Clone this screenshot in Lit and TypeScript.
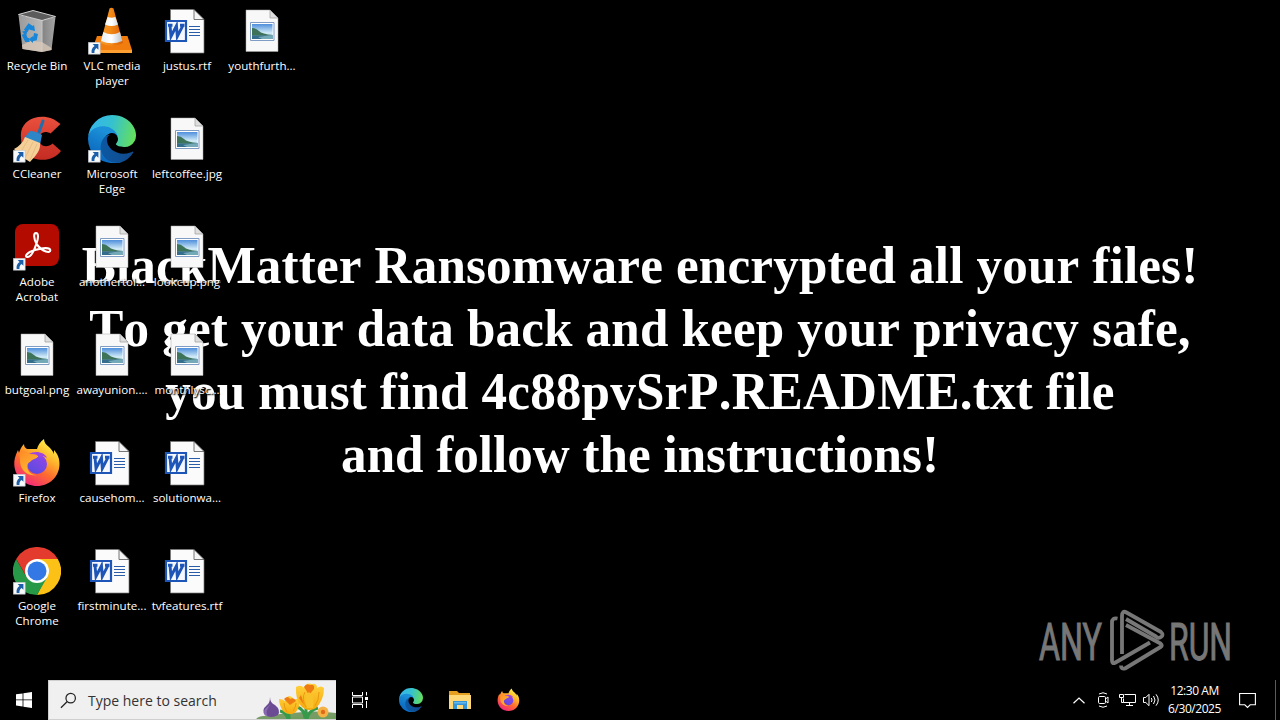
import { LitElement, html, css, svg } from "lit";
import { customElement, property } from "lit/decorators.js";

const edge = html`<svg viewBox="0 0 256 256">
  <defs>
    <linearGradient id="e1" x1="60" y1="178" x2="240" y2="178" gradientUnits="userSpaceOnUse"><stop offset="0" stop-color="#0c59a4"/><stop offset="1" stop-color="#114a8b"/></linearGradient>
    <linearGradient id="e2" x1="110" y1="100" x2="45" y2="235" gradientUnits="userSpaceOnUse"><stop offset="0" stop-color="#1b8fd8"/><stop offset=".5" stop-color="#1279c8"/><stop offset="1" stop-color="#0a67c0"/></linearGradient>
    <linearGradient id="e3" x1="10" y1="60" x2="250" y2="120" gradientUnits="userSpaceOnUse"><stop offset="0" stop-color="#35b6ec"/><stop offset=".45" stop-color="#35c1cf"/><stop offset="1" stop-color="#66e05a"/></linearGradient>
  </defs>
  <path fill="url(#e1)" d="M235.68 195.46a93.73 93.73 0 0 1-10.54 4.71 101.87 101.87 0 0 1-35.9 6.46c-47.32 0-88.54-32.55-88.54-74.32a31.48 31.48 0 0 1 16.43-27.31c-42.8 1.8-53.8 46.4-53.8 72.53 0 73.88 68.09 81.37 82.76 81.37 7.91 0 19.84-2.3 27-4.56l1.31-.44a128.34 128.34 0 0 0 66.6-52.8 4 4 0 0 0-5.32-5.64z"/>
  <path fill="url(#e2)" d="M105.73 241.42a79.2 79.2 0 0 1-22.74-21.34 80.72 80.72 0 0 1 29.53-120c3.12-1.47 8.45-4.13 15.54-4a32.35 32.35 0 0 1 25.69 13 31.88 31.88 0 0 1 6.36 18.66c0-.21 24.46-79.6-80-79.6-43.9 0-80 41.66-80 78.21a130.15 130.15 0 0 0 12.11 56 128 128 0 0 0 156.38 67.11 75.55 75.55 0 0 1-62.78-8z"/>
  <path fill="url(#e3)" d="M152.33 148.86c-.81 1.05-3.3 2.5-3.3 5.66 0 2.61 1.7 5.12 4.72 7.23 14.38 10 41.49 8.68 41.56 8.68a59.56 59.56 0 0 0 30.27-8.35 61.38 61.38 0 0 0 30.43-52.88c.26-22.41-8-37.31-11.34-43.91C223.46 23.84 177.72 0 128 0A128 128 0 0 0 0 126.2c.48-36.54 36.8-66.05 80-66.05 3.5 0 23.46.34 42 10.07 16.34 8.58 24.9 18.94 30.85 29.21 6.18 10.67 7.28 24.15 7.28 29.52s-2.74 13.33-7.8 19.91z"/>
</svg>`;

const firefox = html`<svg viewBox="0 0 48 48">
  <defs>
    <linearGradient id="f1" x1="38" y1="4" x2="12" y2="46" gradientUnits="userSpaceOnUse"><stop offset="0" stop-color="#fff04a"/><stop offset=".3" stop-color="#ffb52c"/><stop offset=".6" stop-color="#ff6a2f"/><stop offset="1" stop-color="#f0257f"/></linearGradient>
    <linearGradient id="f2" x1="32" y1="13" x2="18" y2="34" gradientUnits="userSpaceOnUse"><stop offset="0" stop-color="#9a45e8"/><stop offset="1" stop-color="#5a4be0"/></linearGradient>
    <linearGradient id="f3" x1="10" y1="10" x2="22" y2="26" gradientUnits="userSpaceOnUse"><stop offset="0" stop-color="#ff8a28"/><stop offset="1" stop-color="#ffb22e"/></linearGradient>
  </defs>
  <path fill="url(#f1)" d="M31 0c-4 3-6 6-7 10H14c-2-1-3-3-3-5-3 3-4 6-5 9l-1-3C2 17 1 21 1.300 26 2 38 12 47 24 47c13 0 22.500-10 22.500-22 0-6-2-10-5.500-14v4c-1-3-3-5-5-7-3-2-5-5-5-8z"/>
  <circle cx="24" cy="25" r="10" fill="url(#f2)"/>
  <path fill="#a044e0" d="M16 15c6-4 16-2 18 4-3-2-5-2-7-1-3-1-7-1-11-3z"/>
  <path fill="url(#f3)" d="M7 12c3-1 7 0 9 3 4 0 7 0 9 2 1 2-6 3-8 6-3 1-3 5-2 8 2 4 6 5 9 5-9 2-17-5-17-14 0-4-1-7 0-10z"/>
</svg>`;

const page = svg`<path fill="#f8f8f8" stroke="#a9a9a9" stroke-width=".5" d="M8 3h24l8 8v33.500H8z"/><path fill="#dedede" stroke="#9b9b9b" stroke-width=".7" d="M32 3v8h8z"/>`;

const art: Record<string, unknown> = {
  edge,
  firefox,
  bin: html`<svg viewBox="0 0 48 48">
    <defs><linearGradient id="b1" x1="0" x2="1"><stop offset="0" stop-color="#9a9a9a"/><stop offset=".62" stop-color="#b9b9b9"/><stop offset=".66" stop-color="#858585"/><stop offset="1" stop-color="#a5a5a5"/></linearGradient></defs>
    <path fill="url(#b1)" d="M5.500 8 29 13l13.500-3-4 33-9.500 2-19.500-3z"/>
    <path fill="#5c5c5c" stroke="#d2d2d2" stroke-width="1" d="M5.500 7.500 20 3.500 42.500 9.500 29 13.500z"/>
    <path fill="#dac7b8" opacity=".8" d="m9 38 9-4 11 1 9.500 6v2l-9.500 2-19.500-3z"/>
    <path stroke="#d4d4d4" stroke-width=".6" d="M29 13v31"/>
    <g fill="none" stroke="#1786d8" stroke-width="4"><path d="m12.500 24 3.500-5 4 2.500M10.500 27l3 6h3M18 32.500l4-1 1-5"/></g>
    <path fill="#1786d8" d="m21 18 1 6-6-1.500zM9 24.500l5.500-1L13 29zM20 29v7l-4-3.500z"/>
  </svg>`,
  vlc: html`<svg viewBox="0 0 48 48">
    <defs><linearGradient id="v1" x1="0" x2="1"><stop offset="0" stop-color="#f59a2c"/><stop offset=".45" stop-color="#f38a18"/><stop offset="1" stop-color="#d95f04"/></linearGradient>
    <linearGradient id="v2" x1="0" x2="1"><stop offset="0" stop-color="#e6edf2"/><stop offset=".5" stop-color="#fff"/><stop offset="1" stop-color="#b8c3cb"/></linearGradient></defs>
    <path fill="#f07d0e" d="M9 29h30.500l4.500 14v3H4v-3z"/><path fill="#ffa031" d="M4 43h40v3H4z"/>
    <path fill="url(#v1)" d="M21.500 1.500q2-1.500 4 0L35 36q-11 6-22.500 0z"/>
    <path fill="url(#v2)" d="M19.700 10q3.800 1.600 7.600 0l2.700 7.500q-6.500 3-13 0zM15.300 25q8.500 4.500 16.700 0l2.300 9q-10.500 4.500-21.300 0z"/>
  </svg>`,
  ccleaner: html`<svg viewBox="0 0 48 48">
    <defs><linearGradient id="c1" x1="0" y1="0" x2="0" y2="1"><stop offset="0" stop-color="#e9503d"/><stop offset="1" stop-color="#c42b22"/></linearGradient></defs>
    <path fill="url(#c1)" d="M47.500 9C40 2 30 0 21 3 12 6 7 13 8 23c0 11 6 20 17 21.500 10 1.500 18-2 23-8.500l-8.500-7.500c-4 4-11 4-13-2-2-8 5-12 11-8z"/>
    <path stroke="#1d6fae" stroke-width="3" stroke-linecap="round" d="m30 6-5 14"/>
    <path fill="#2d86c8" d="M17 16q6 0 12 4l-2 10-16-7z"/>
    <path fill="#f4cf98" d="m12 22 15 6c1 8-5 13-10 19Q7 41 1 34q8-4 11-12z"/>
    <path fill="none" stroke="#e3b67c" stroke-width=".8" d="m15 25-8 13m13-11-8 16m12-14-7 16"/>
  </svg>`,
  acrobat: html`<svg viewBox="0 0 48 48">
    <rect x="2" y="1" width="44" height="42" rx="8" fill="#b30b00"/>
    <path fill="none" stroke="#fff" stroke-width="2.100" stroke-linejoin="round" d="M23.500 21C20.500 15 20.500 10 23 10s2.700 5 .3 11C21 28 17.500 34 14.500 34c-3.500 0-1-4.500 7.500-7s15-2.500 15.300.2c.2 3.300-7.300 2.300-13.800-6.200z"/>
  </svg>`,
  chrome: html`<svg viewBox="0 0 48 48">
    <path fill="#e33b2e" d="M24 24 3.200 12A24 24 0 0 1 44.800 12z"/><path fill="#fbc116" d="M24 12h20.800A24 24 0 0 1 24 48l9-18z"/>
    <path fill="#279847" d="M3.200 12A24 24 0 0 0 24 48l10.400-18L13.600 30z"/><path fill="#e33b2e" d="M3.200 12 13.600 30 24 12z"/>
    <circle cx="24" cy="24" r="12" fill="#fff"/><circle cx="24" cy="24" r="9.500" fill="#3478e5"/>
  </svg>`,
  image: html`<svg viewBox="0 0 48 48">
    <defs><linearGradient id="i1" x1="0" y1="0" x2="0" y2="1"><stop offset="0" stop-color="#4f8fdc"/><stop offset=".6" stop-color="#d3ecf7"/><stop offset="1" stop-color="#8ab8d4"/></linearGradient></defs>
    ${page}
    <path fill="#fff" stroke="#7f9cc4" d="M12.500 15.500h23.500v18H12.500z"/><path fill="url(#i1)" d="M14 17h20.500v15H14z"/>
    <path fill="#3d7358" d="M14 21q4 0 7 3t13.500 4v.8H14z"/><path fill="#356d8c" d="M14 28.500h20.500V32H14z"/><path fill="#74aab8" d="m20 30 14.500-2v4H24z"/>
  </svg>`,
  word: html`<svg viewBox="0 0 48 48">
    <path fill="#fbfbfb" stroke="#777" stroke-width=".7" d="M7.500 2.500h23L41 12.500V46H7.500z"/><path fill="#f4f4f4" stroke="#555" stroke-width=".8" d="M31 2.500v10h10z"/>
    <path stroke="#2b5ca8" d="M26 19.500h11M26 22.500h11M26 25.500h11M26 28.500h11"/>
    <path fill="#f5f8ff" stroke="#1e56b8" stroke-width="2.200" d="M3 14h20v20H3z"/>
    <path fill="none" stroke="#1e56b8" stroke-width="2.900" d="M7 18.300 8 29.500l5.500-10.700.8 10.700 5.700-11.200M5 18.300h4.500m7.500 0h4.500" />
  </svg>`,
};

interface Item { icon: string; lines: string[]; link?: boolean }
const items: Item[] = [
  { icon: "bin", lines: ["Recycle Bin"] },
  { icon: "ccleaner", lines: ["CCleaner"], link: true },
  { icon: "acrobat", lines: ["Adobe", "Acrobat"], link: true },
  { icon: "image", lines: ["butgoal.png"] },
  { icon: "firefox", lines: ["Firefox"], link: true },
  { icon: "chrome", lines: ["Google", "Chrome"], link: true },
  { icon: "vlc", lines: ["VLC media", "player"], link: true },
  { icon: "edge", lines: ["Microsoft", "Edge"], link: true },
  { icon: "image", lines: ["anothertol..."] },
  { icon: "image", lines: ["awayunion...."] },
  { icon: "word", lines: ["causehom..."] },
  { icon: "word", lines: ["firstminute..."] },
  { icon: "word", lines: ["justus.rtf"] },
  { icon: "image", lines: ["leftcoffee.jpg"] },
  { icon: "image", lines: ["lookcup.png"] },
  { icon: "image", lines: ["monthlysc..."] },
  { icon: "word", lines: ["solutionwa..."] },
  { icon: "word", lines: ["tvfeatures.rtf"] },
  { icon: "image", lines: ["youthfurth..."] },
];

@customElement("desktop-icon")
class DesktopIcon extends LitElement {
  @property({ attribute: false }) item!: Item;
  static styles = css`
    :host { display: flex; flex-direction: column; align-items: center; width: 74px; }
    .art { position: relative; width: 48px; height: 48px; margin-bottom: 3px; }
    .art > svg { display: block; width: 48px; height: 48px; }
    .art > .link { position: absolute; left: 0; top: 35px; width: 12.500px; height: 12.500px; }
    .line { font: 11.600px/15px "Open Sans", "Noto Sans", sans-serif; color: #fff; white-space: nowrap; text-shadow: 0 1px 2px #000, 1px 1px 1px #000; }
  `;
  render() {
    return html`<div class="art">${art[this.item.icon]}${this.item.link ? html`<svg class="link" viewBox="0 0 12 12"><path fill="#f7f9fb" stroke="#b9bec4" stroke-width=".6" d="M.3.3h11.400v11.400H.3z"/><path fill="#1d5ea8" d="M4.500 2H10v5.500L8.200 5.800C6.500 7 6 8.500 6.200 10.500H3.500C3 7.500 4 5.500 6.300 3.900z"/></svg>` : ""}</div>
      ${this.item.lines.map((l) => html`<div class="line">${l}</div>`)}`;
  }
}

@customElement("task-bar")
class TaskBar extends LitElement {
  static styles = css`
    :host { display: flex; height: 40px; background: #000; color: #fff; }
    svg { display: block; }
    .start { width: 48px; display: grid; place-items: center; }
    .search { box-sizing: border-box; width: 288px; background: #f0f0f0; border: 1px solid #cfcfcf; border-width: 1px 0 1px 1px; display: flex; align-items: center; color: #333; }
    .glass { margin-left: 11px; width: 17px; height: 17px; }
    .hint { margin-left: 11px; padding-top: 1px; width: 168px; font: 14px/20px "Open Sans", "Noto Sans", sans-serif; white-space: nowrap; }
    .flowers { width: 80px; height: 38px; }
    .cell { width: 49px; display: grid; place-items: center; }
    .view { width: 48px; margin-right: 2px; }
    .edge svg { width: 24px; height: 24px; } .fox svg { width: 23px; height: 24px; }
    .tray { margin-left: auto; display: flex; align-items: center; }
    .tray .ico { width: 24px; display: grid; place-items: center; }
    .clock { width: 63px; font: 12px/18px "Open Sans", "Noto Sans", sans-serif; letter-spacing: -.45px; text-align: center; white-space: nowrap; }
    .note { width: 42px; display: grid; place-items: center; }
    .show { margin-left: 7px; width: 4px; height: 40px; border-left: 1px solid #5c5c5c; }
  `;
  render() {
    return html`
      <div class="start"><svg width="16" height="16" viewBox="0 0 16 16" fill="#fff"><path d="M0 2.300 6.600 1.400v6.100H0zM7.400 1.300 16 0v7.500H7.400zM0 8.300h6.600v6.200L0 13.600zM7.400 8.300H16V16l-8.600-1.300z"/></svg></div>
      <div class="search">
        <svg class="glass" viewBox="0 0 18 18" fill="none" stroke="#222" stroke-width="1.300"><circle cx="11.300" cy="6.500" r="5"/><path d="M7.700 10 1 16.700"/></svg>
        <div class="hint">Type here to search</div>
        <svg class="flowers" viewBox="0 0 80 38">
          <defs><linearGradient id="y" x1="0" y1="0" x2="0" y2="1"><stop offset="0" stop-color="#ffd23e"/><stop offset="1" stop-color="#f5a90c"/></linearGradient></defs>
          <path fill="#789c68" d="M0 38q4-4 14-3 12-3 22-3 24-3 44 0v6z"/>
          <path fill="#6f9e5c" d="M28 38q12-4 24-1l28-2v3z"/>
          <path fill="#6b4b93" d="M14 16q0 6 5 8 6 5 3 10-7 4-13 0-4-5 2-10 3-2 3-8z"/><path fill="#8b6bb0" d="M15 23q-7 7-3 13-6-3-3-8z"/>
          <path fill="none" stroke="#379a4a" stroke-width="3" d="M33 30v8M50 27v11M24 30q6 1 8 8M62 27q-9 2-11 11M41 26q7 2 8 11"/>
          <path fill="url(#y)" d="M23 18q4 0 6 2 1-5 5-5 3 1 4 4 3-2 6-1 0 8-4 13-7 5-13-1-4-6-4-12z"/>
          <path fill="#ee7b12" d="M28 18q4-4 6 0 4-2 6 2l-6 4z"/>
          <path fill="url(#y)" d="M40 6q5-3 8 1 2-6 8-4 5-1 5 4 4-3 7 0 0 12-8 20-8 5-15-2-6-8-5-19z"/>
          <path fill="#ee7b12" d="M48 6q2-4 6-2 5-1 4 4l-5 6zM45 14l3 10-5-7z"/>
          <path fill="#fac22a" d="M53 11q6 4 4 16l-6 0q-4-10 2-16z"/>
          <path fill="none" stroke="#e8950f" stroke-width=".9" d="M50 26q-5-8-1-15M59 25q4-6 4-14M31 31q-3-5-3-9M37 30q3-4 3-8"/>
          <circle cx="67" cy="31" r="5.500" fill="#f4b244"/><circle cx="67" cy="31" r="2.200" fill="#e06a1a"/>
        </svg>
      </div>
      <div class="cell view"><svg width="16" height="16" viewBox="0 0 16 16" fill="none" stroke="#fff"><path d="M.5 0v3.500h10V0M.5 16v-3.500h10V16M.5 5h10v6H.5zM14.500 0v3.500M14.500 9v7"/><path fill="#fff" stroke="none" d="M13 5h3v3h-3z"/></svg></div>
      <div class="cell edge">${edge}</div>
      <div class="cell"><svg width="22" height="18" viewBox="0 0 22 18"><path fill="#e5a01f" d="M0 0h8l2 2h11v5H0z"/><path fill="#ffd978" d="M0 4h22v14H0z"/><path fill="#3496d8" d="M4 10h14v8h-4v-4H8v4H4z"/><path fill="#67b8ea" d="M5 11h12v1.500H5z"/></svg></div>
      <div class="cell fox">${firefox}</div>
      <div class="tray">
        <div class="ico"><svg width="12" height="7" viewBox="0 0 12 7" fill="none" stroke="#fff" stroke-width="1.200"><path d="M.5 6.300 6 1l5.500 5.300"/></svg></div>
        <div class="ico"><svg width="14" height="16" viewBox="0 0 14 16" fill="none" stroke="#fff"><rect x="2.500" y="4.500" width="7" height="7" rx="1.200"/><path d="m9.500 7 2.500-2v6l-2.500-2M3 2q4-2.500 8 0M3 14q4 2.500 8 0"/></svg></div>
        <div class="ico"><svg width="17" height="14" viewBox="0 0 17 14" fill="none" stroke="#fff"><path d="M5.500 1.500h11v8H4.500v-4M10.500 9.500v3M7 12.500h7M.5 1.500h4v3h-4zM2.500 4.500v5h2"/></svg></div>
        <div class="ico"><svg width="17" height="14" viewBox="0 0 17 14" fill="none" stroke="#fff"><path d="M.5 4.500h2.300L6 1.300v11.400L2.800 9.500H.5zM8.300 5q1.500 2 0 4M10.500 3q3 4 0 8M13 1.300q4.500 5.700 0 11.400"/></svg></div>
        <div class="clock"><div>12:30 AM</div><div>6/30/2025</div></div>
        <div class="note"><svg width="17" height="17" viewBox="0 0 17 17" fill="none" stroke="#fff" stroke-width="1.100"><path d="M.6 1.500h15.800v11.300h-5.200L8.500 15.500l-2.700-2.700H.6z"/></svg></div>
        <div class="show"></div>
      </div>`;
  }
}

@customElement("app-root")
class AppRoot extends LitElement {
  static styles = css`
    :host { display: flex; flex-direction: column; position: relative; width: 1280px; height: 720px; overflow: hidden; background: #000; }
    .wall { position: absolute; left: 0; right: 0; top: 234px; display: flex; flex-direction: column; align-items: center; font: bold 52px/63px "Liberation Serif", serif; font-kerning: none; letter-spacing: .17px; color: #fff; white-space: nowrap; transform: scaleX(.983); }
    .wall .last { letter-spacing: 0; }
    .icons { position: relative; flex: 1; display: grid; grid-auto-flow: column; grid-template-rows: repeat(6, 108px); grid-auto-columns: 75px; padding-top: 7px; height: 673px; box-sizing: border-box; min-height: 0; }
    .mark { position: absolute; left: 1030px; top: 600px; width: 210px; height: 80px; overflow: visible; }
    .mark text { font: 400 52px Roboto, sans-serif; fill: #777; stroke: #777; stroke-width: 1.100px; }
    task-bar { position: relative; }
  `;
  render() {
    return html`
      <div class="wall">
        <div>BlackMatter Ransomware encrypted all your files!</div>
        <div>To get your data back and keep your privacy safe,</div>
        <div>you must find 4c88pvSrP.README.txt file</div>
        <div class="last">and follow the instructions!</div>
      </div>
      <svg class="mark" viewBox="1030 600 210 80">
        <text x="1039" y="659.500" textLength="63" lengthAdjust="spacingAndGlyphs">ANY</text>
        <text x="1169" y="659.500" textLength="63" lengthAdjust="spacingAndGlyphs">RUN</text>
        <g fill="none" stroke="#777" stroke-width="3.800" stroke-linejoin="round">
          <path d="M1117.500 618.500q-5.500-1-5.500 4v38q0 4 3.500 2L1150 642.500"/>
          <path d="M1122 654v-38q0-6 4.500-3.500l34.500 19.500q3 3 0 5t-5-.5L1126 619"/>
          <path d="M1126 625l34.500 18.500q2.500 2 0 3.500L1125 668.500q-4 1-4-3"/>
        </g>
      </svg>
      <div class="icons">${items.map((i) => html`<desktop-icon .item=${i}></desktop-icon>`)}</div>
      <task-bar></task-bar>`;
  }
}
